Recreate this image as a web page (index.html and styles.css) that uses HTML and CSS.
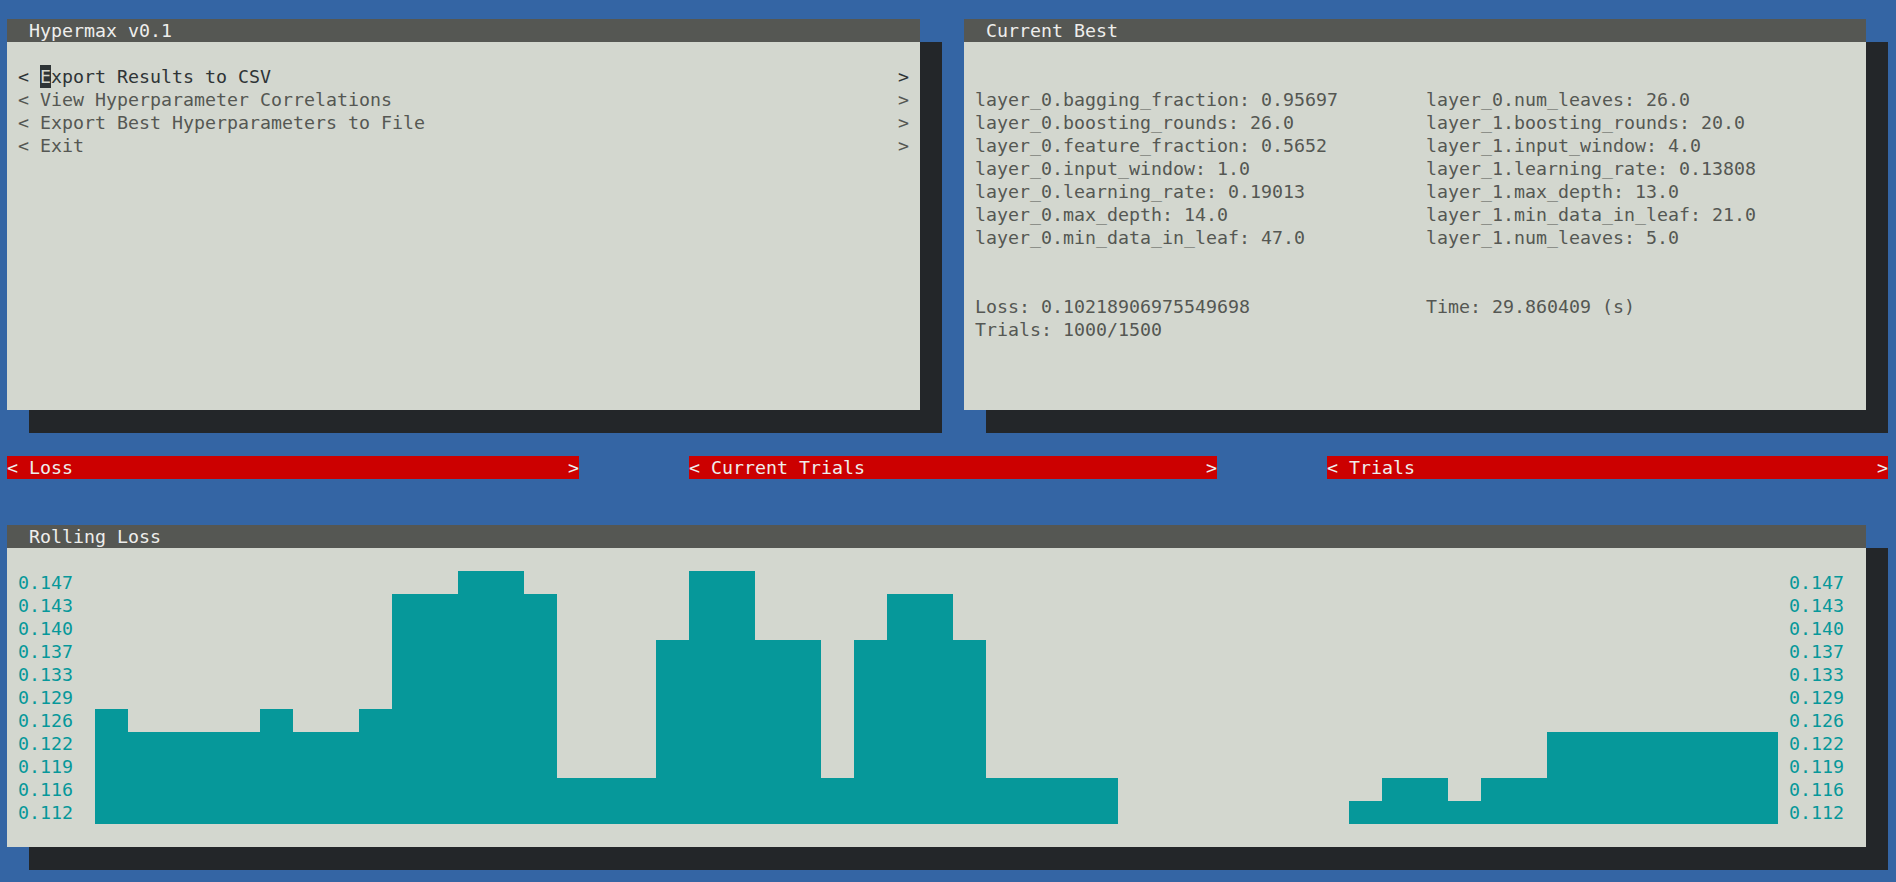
FILE: index.html
```html
<!DOCTYPE html>
<html>
<head>
<meta charset="utf-8">
<title>Hypermax</title>
<link rel="stylesheet" href="styles.css">
</head>
<body>
<div class="screen">
  <div class="top">
    <div class="panel panel-left">
      <div class="title">Hypermax v0.1</div>
      <div class="menu">
        <div class="item focus"><span>&lt; <span class="cursor">E</span>xport Results to CSV</span><span>&gt;</span></div>
        <div class="item"><span>&lt; View Hyperparameter Correlations</span><span>&gt;</span></div>
        <div class="item"><span>&lt; Export Best Hyperparameters to File</span><span>&gt;</span></div>
        <div class="item"><span>&lt; Exit</span><span>&gt;</span></div>
      </div>
    </div>
    <div class="panel panel-right">
      <div class="title">Current Best</div>
      <div class="best">
        <div class="grid">
          <div>layer_0.bagging_fraction: 0.95697</div><div>layer_0.num_leaves: 26.0</div>
          <div>layer_0.boosting_rounds: 26.0</div><div>layer_1.boosting_rounds: 20.0</div>
          <div>layer_0.feature_fraction: 0.5652</div><div>layer_1.input_window: 4.0</div>
          <div>layer_0.input_window: 1.0</div><div>layer_1.learning_rate: 0.13808</div>
          <div>layer_0.learning_rate: 0.19013</div><div>layer_1.max_depth: 13.0</div>
          <div>layer_0.max_depth: 14.0</div><div>layer_1.min_data_in_leaf: 21.0</div>
          <div>layer_0.min_data_in_leaf: 47.0</div><div>layer_1.num_leaves: 5.0</div>
        </div>
        <div class="grid stats">
          <div>Loss: 0.10218906975549698</div><div>Time: 29.860409 (s)</div>
          <div>Trials: 1000/1500</div><div></div>
        </div>
      </div>
    </div>
  </div>

  <div class="tabs">
    <div class="tab tab-loss"><span>&lt; Loss</span><span>&gt;</span></div>
    <div class="tab tab-current"><span>&lt; Current Trials</span><span>&gt;</span></div>
    <div class="tab tab-trials"><span>&lt; Trials</span><span>&gt;</span></div>
  </div>

  <div class="panel rolling">
    <div class="title">Rolling Loss</div>
    <div class="chart-body">
      <div class="axis axis-left">
        <div>0.147</div><div>0.143</div><div>0.140</div><div>0.137</div><div>0.133</div><div>0.129</div><div>0.126</div><div>0.122</div><div>0.119</div><div>0.116</div><div>0.112</div>
      </div>
      <div class="plot">
        <div class="bar" style="height:115px"></div>
        <div class="bar" style="height:92px"></div>
        <div class="bar" style="height:92px"></div>
        <div class="bar" style="height:92px"></div>
        <div class="bar" style="height:92px"></div>
        <div class="bar" style="height:115px"></div>
        <div class="bar" style="height:92px"></div>
        <div class="bar" style="height:92px"></div>
        <div class="bar" style="height:115px"></div>
        <div class="bar" style="height:230px"></div>
        <div class="bar" style="height:230px"></div>
        <div class="bar" style="height:253px"></div>
        <div class="bar" style="height:253px"></div>
        <div class="bar" style="height:230px"></div>
        <div class="bar" style="height:46px"></div>
        <div class="bar" style="height:46px"></div>
        <div class="bar" style="height:46px"></div>
        <div class="bar" style="height:184px"></div>
        <div class="bar" style="height:253px"></div>
        <div class="bar" style="height:253px"></div>
        <div class="bar" style="height:184px"></div>
        <div class="bar" style="height:184px"></div>
        <div class="bar" style="height:46px"></div>
        <div class="bar" style="height:184px"></div>
        <div class="bar" style="height:230px"></div>
        <div class="bar" style="height:230px"></div>
        <div class="bar" style="height:184px"></div>
        <div class="bar" style="height:46px"></div>
        <div class="bar" style="height:46px"></div>
        <div class="bar" style="height:46px"></div>
        <div class="bar" style="height:46px"></div>
        <div class="bar" style="height:0px"></div>
        <div class="bar" style="height:0px"></div>
        <div class="bar" style="height:0px"></div>
        <div class="bar" style="height:0px"></div>
        <div class="bar" style="height:0px"></div>
        <div class="bar" style="height:0px"></div>
        <div class="bar" style="height:0px"></div>
        <div class="bar" style="height:23px"></div>
        <div class="bar" style="height:46px"></div>
        <div class="bar" style="height:46px"></div>
        <div class="bar" style="height:23px"></div>
        <div class="bar" style="height:46px"></div>
        <div class="bar" style="height:46px"></div>
        <div class="bar" style="height:92px"></div>
        <div class="bar" style="height:92px"></div>
        <div class="bar" style="height:92px"></div>
        <div class="bar" style="height:92px"></div>
        <div class="bar" style="height:92px"></div>
        <div class="bar" style="height:92px"></div>
        <div class="bar" style="height:92px"></div>
      </div>
      <div class="axis axis-right">
        <div>0.147</div><div>0.143</div><div>0.140</div><div>0.137</div><div>0.133</div><div>0.129</div><div>0.126</div><div>0.122</div><div>0.119</div><div>0.116</div><div>0.112</div>
      </div>
    </div>
  </div>
</div>
</body>
</html>
```

FILE: styles.css
```css
html, body {
  margin: 0;
  padding: 0;
}
body {
  background: #3465a4;
  font-family: "DejaVu Sans Mono", monospace;
  font-size: 18.27px;
  line-height: 23px;
  font-variant-ligatures: none;
  height: 882px;
  overflow: hidden;
}
.screen {
  display: flex;
  flex-direction: column;
  align-items: flex-start;
  padding: 19px 0 0 7px;
}
.top {
  display: flex;
  gap: 44px;
}
.panel {
  background: #d3d7cf;
  color: #555753;
  box-shadow: 22px 23px 0 0 #232629;
}
.panel-left {
  width: 913px;
  height: 391px;
}
.panel-right {
  width: 902px;
  height: 391px;
}
.title {
  background: #555753;
  color: #eeeeec;
  height: 23px;
  padding-left: 22px;
  white-space: pre;
}
.menu {
  padding: 23px 11px 0 11px;
}
.item {
  display: flex;
  justify-content: space-between;
  height: 23px;
}
.item > span {
  white-space: pre;
}
.item.focus {
  color: #2e3436;
}
.cursor {
  display: inline-block;
  width: 11px;
  height: 23px;
  vertical-align: top;
  background: #2e3436;
  color: #d3d7cf;
}
.best {
  padding: 46px 11px 0 11px;
}
.grid {
  display: grid;
  grid-template-columns: 451px auto;
  grid-auto-rows: 23px;
}
.grid > div {
  white-space: pre;
}
.stats {
  margin-top: 46px;
}
.tabs {
  display: flex;
  gap: 110px;
  margin-top: 46px;
}
.tab {
  display: flex;
  justify-content: space-between;
  height: 23px;
  background: #cc0000;
  color: #eeeeec;
}
.tab > span {
  white-space: pre;
}
.tab-loss { width: 572px; }
.tab-current { width: 528px; }
.tab-trials { width: 561px; }
.rolling {
  width: 1859px;
  height: 322px;
  margin-top: 46px;
}
.chart-body {
  display: flex;
  padding: 23px 22px 0 11px;
}
.axis {
  width: 55px;
  display: flex;
  flex-direction: column;
  color: #06989a;
}
.axis-left { margin-right: 22px; }
.axis-right { margin-left: 11px; }
.plot {
  display: flex;
  align-items: flex-end;
  width: 1683px;
  height: 253px;
}
.bar {
  flex: none;
  width: 33px;
  background: #06989a;
}
```
